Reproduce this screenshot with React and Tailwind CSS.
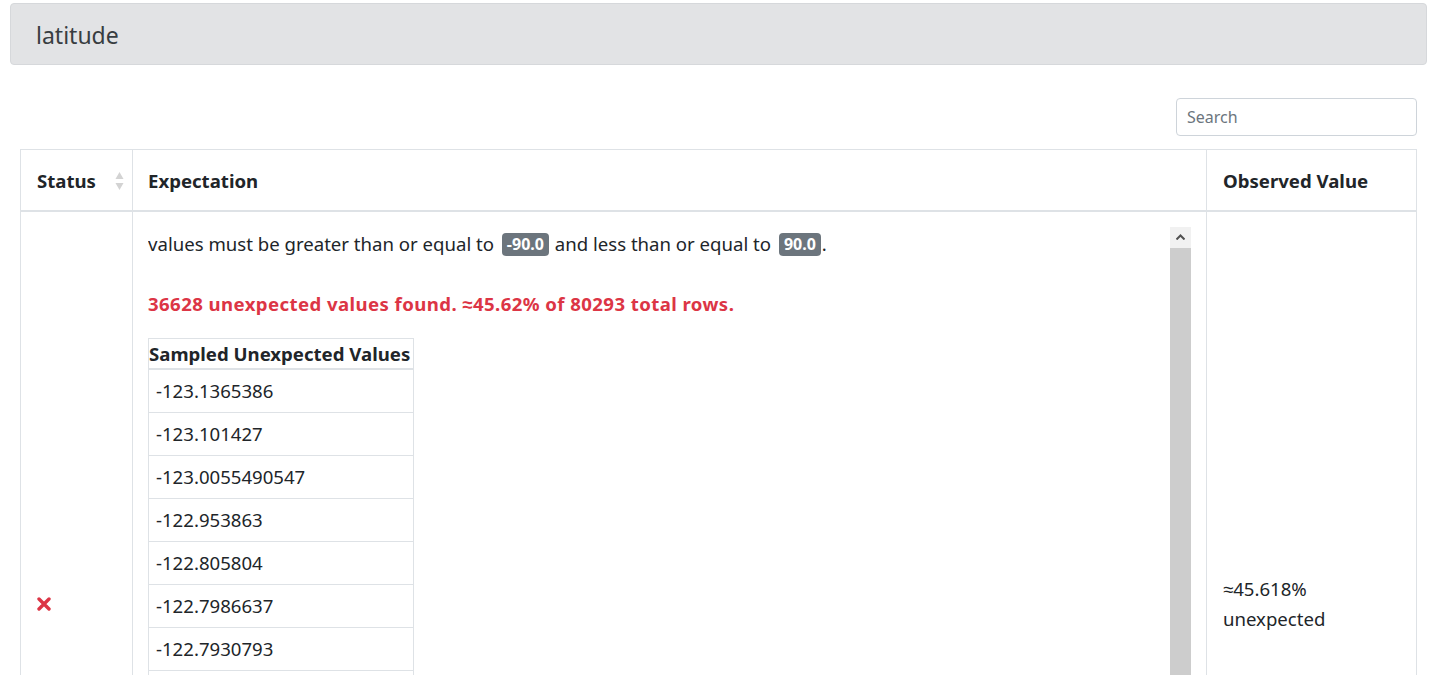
const values = [
  "-123.1365386",
  "-123.101427",
  "-123.0055490547",
  "-122.953863",
  "-122.805804",
  "-122.7986637",
  "-122.7930793",
  "-122.7901",
  "-122.7860",
  "-122.7801",
  "-122.7799",
  "-122.7742",
  "-122.7700",
  "-122.7651",
  "-122.7600",
  "-122.7555",
  "-122.7500",
];

const Badge = ({ children }) => (
  <span className="inline-block bg-[#6c757d] text-white text-[16px] font-bold leading-[23px] px-[5px] ml-[3px] mr-[1px] rounded-[4px] align-[1px]">
    {children}
  </span>
);

const SortIcon = () => (
  <svg width="9" height="20" viewBox="0 0 9 20" className="text-[#d3d3d3]">
    <path d="M4.5 1 L8.5 8 L0.5 8 Z" fill="currentColor" />
    <path d="M4.5 19 L8.5 12 L0.5 12 Z" fill="currentColor" />
  </svg>
);

const App = () => {
  return (
    <div className="w-[1437px] h-[675px] overflow-hidden bg-white text-[#212529] font-['Noto_Sans',sans-serif] text-[18.6px]">
      <div className="pt-[3px] px-[10px]">
        <div className="h-[62px] bg-[#e2e3e5] border border-[#d6d8db] rounded-[4px] flex items-center pl-[25px] pt-[3px]">
          <h2 className="text-[23px] text-[#383d41] leading-none">latitude</h2>
        </div>
      </div>

      <div className="px-[20px]">
        <div className="flex justify-end mt-[33px] mb-[13px]">
          <input
            placeholder="Search"
            className="w-[241px] h-[38px] border border-[#ced4da] rounded-[4px] px-[10px] text-[16px] placeholder:text-[#6c757d] outline-none"
          />
        </div>

        <table className="w-[1397px] border-collapse table-fixed">
          <thead>
            <tr className="h-[61px]">
              <th className="w-[112px] border border-[#dee2e6] border-b-2 text-left font-bold pl-[16px] pr-[8px] pt-[2px]">
                <div className="flex items-center justify-between">
                  <span>Status</span>
                  <SortIcon />
                </div>
              </th>
              <th className="border border-[#dee2e6] border-b-2 text-left font-bold pl-[15px] pt-[2px]">
                Expectation
              </th>
              <th className="w-[210px] border border-[#dee2e6] border-b-2 text-left font-bold pl-[16px] pt-[2px]">
                Observed Value
              </th>
            </tr>
          </thead>
          <tbody>
            <tr>
              <td className="border border-[#dee2e6] align-middle pl-[16px]">
                <svg width="14" height="14" viewBox="0 0 14 14" className="text-[#dc3545] mt-[1px]">
                  <path d="M2 2 L12 12 M12 2 L2 12" stroke="currentColor" strokeWidth="3.4" strokeLinecap="round" />
                </svg>
              </td>
              <td className="border border-[#dee2e6] align-top px-[15px] py-[15px]">
                <div className="h-[754px] flex">
                  <div className="flex-1 overflow-hidden pt-[3px]">
                    <p className="leading-[27px]">
                      values must be greater than or equal to <Badge>-90.0</Badge> and less than or equal to{" "}
                      <Badge>90.0</Badge>.
                    </p>
                    <p className="mt-[33px] leading-[27px] text-[#dc3545] font-bold tracking-[0.42px]">
                      36628 unexpected values found. ≈45.62% of 80293 total rows.
                    </p>
                    <table className="mt-[21px] border-collapse w-[266px]">
                      <thead>
                        <tr>
                          <th className="border border-[#dee2e6] border-b-2 text-left font-bold leading-[29px] px-0">
                            Sampled Unexpected Values
                          </th>
                        </tr>
                      </thead>
                      <tbody>
                        {values.map((v) => (
                          <tr key={v}>
                            <td className="border border-[#dee2e6] px-[7px] py-[7.5px] leading-[27px]">{v}</td>
                          </tr>
                        ))}
                      </tbody>
                    </table>
                  </div>
                  <div className="w-[21px] flex flex-col">
                    <div className="h-[21px] bg-[#f1f1f1] flex items-center justify-center">
                      <svg width="9" height="6" viewBox="0 0 9 6">
                        <path d="M0.5 5.5 L4.5 1.5 L8.5 5.5" fill="none" stroke="#505050" strokeWidth="2" />
                      </svg>
                    </div>
                    <div className="flex-1 bg-[#cdcdcd]" />
                  </div>
                </div>
              </td>
              <td className="border border-[#dee2e6] align-middle pl-[16px]">
                <div className="leading-[30px]">
                  ≈45.618%
                  <br />
                  unexpected
                </div>
              </td>
            </tr>
          </tbody>
        </table>
      </div>
    </div>
  );
};

export default App;
